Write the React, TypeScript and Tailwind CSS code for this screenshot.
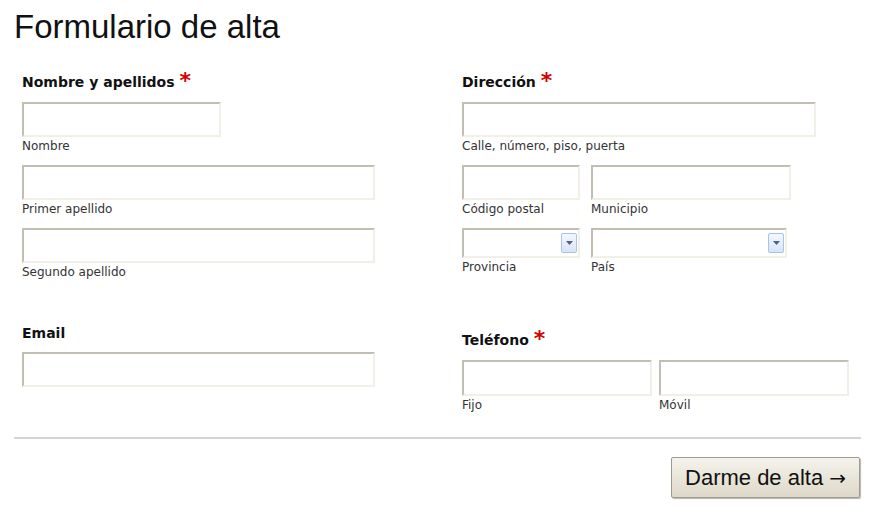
import { ReactNode } from "react";

const labelFont = "font-['Verdana','DejaVu_Sans',sans-serif]";

function Label({ children, required }: { children: ReactNode; required?: boolean }) {
  return (
    <div className={`${labelFont} text-[14px] font-bold text-[#111] leading-[18px] flex items-start gap-[5px]`}>
      <span>{children}</span>
      {required && <span className="text-[#d40000] text-[22px] leading-[16px]">*</span>}
    </div>
  );
}

function Hint({ children }: { children: ReactNode }) {
  return <span className={`${labelFont} text-[12px] text-[#333] leading-[14px] mt-[2px]`}>{children}</span>;
}

function Field({ width, hint, height = "h-[35px]" }: { width: string; hint?: string; height?: string }) {
  return (
    <div className="flex flex-col">
      <input
        className={`${width} ${height} bg-white border-2 border-t-[#c2beb2] border-l-[#c2beb2] border-b-[#f2f0e6] border-r-[#f2f0e6] outline-none`}
      />
      {hint && <Hint>{hint}</Hint>}
    </div>
  );
}

function Select({ width, hint }: { width: string; hint: string }) {
  return (
    <div className="flex flex-col">
      <div
        className={`${width} h-[30px] bg-white border-2 border-t-[#c2beb2] border-l-[#c2beb2] border-b-[#f2f0e6] border-r-[#f2f0e6] flex items-center justify-end pr-[1px]`}
      >
        <div className="w-[16px] h-[20px] border border-[#a9c3e8] rounded-[2px] bg-gradient-to-b from-[#f4f8fe] to-[#d6e4f7] flex items-center justify-center">
          <svg width="7" height="4" viewBox="0 0 7 4">
            <path d="M0 0h7L3.5 4z" fill="#4d6185" />
          </svg>
        </div>
      </div>
      <Hint>{hint}</Hint>
    </div>
  );
}

export default function App() {
  return (
    <div className="w-[888px] h-[510px] bg-white font-['Liberation_Sans',Arial,sans-serif] text-[#111]">
      <h1 className="pl-[14px] pt-[8px] text-[33px] leading-[38px] text-[#111]">Formulario de alta</h1>

      <div className="grid grid-cols-[440px_1fr] pl-[22px] pt-[27px]">
        {/* left column */}
        <div className="flex flex-col">
          <Label required>Nombre y apellidos</Label>
          <div className="mt-[11px] flex flex-col gap-[12px]">
            <Field width="w-[199px]" hint="Nombre" />
            <Field width="w-[353px]" hint="Primer apellido" />
            <Field width="w-[353px]" hint="Segundo apellido" />
          </div>
          <div className="mt-[45px]">
            <Label>Email</Label>
          </div>
          <div className="mt-[10px]">
            <Field width="w-[353px]" />
          </div>
        </div>

        {/* right column */}
        <div className="flex flex-col">
          <Label required>Dirección</Label>
          <div className="mt-[11px] flex flex-col gap-[12px]">
            <Field width="w-[354px]" hint="Calle, número, piso, puerta" />
            <div className="flex gap-[11px]">
              <Field width="w-[118px]" hint="Código postal" />
              <Field width="w-[200px]" hint="Municipio" />
            </div>
            <div className="flex gap-[11px]">
              <Select width="w-[118px]" hint="Provincia" />
              <Select width="w-[196px]" hint="País" />
            </div>
          </div>
          <div className="mt-[57px]">
            <Label required>Teléfono</Label>
          </div>
          <div className="mt-[11px] flex gap-[7px]">
            <Field width="w-[190px]" height="h-[36px]" hint="Fijo" />
            <Field width="w-[190px]" height="h-[36px]" hint="Móvil" />
          </div>
        </div>
      </div>

      <div className="mx-[14px] w-[847px] mt-[25px] h-[2px] bg-[#d4d4d4]" />

      <div className="flex justify-start pl-[671px] pt-[18px]">
        <button className="w-[189px] h-[41px] border border-[#9d9a90] rounded-[2px] bg-gradient-to-b from-[#f5f3ec] to-[#ddd8c9] shadow-[1px_1px_1px_#b8b5ab] text-[22px] text-[#111] font-['Liberation_Sans',Arial,sans-serif] flex items-center justify-center gap-[6px]">
          <span>Darme de alta</span>
          <span className="font-['DejaVu_Sans',sans-serif] text-[20px] leading-none">→</span>
        </button>
      </div>
    </div>
  );
}
